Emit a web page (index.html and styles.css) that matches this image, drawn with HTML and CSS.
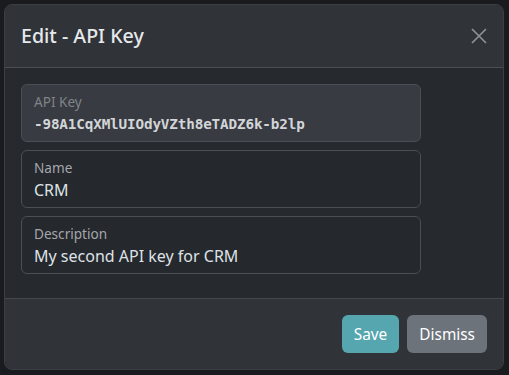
FILE: index.html
```html
<!DOCTYPE html>
<html lang="en">
<head>
    <meta charset="UTF-8">
    <meta name="viewport" content="width=device-width, initial-scale=1.0">
    <title>Edit - API Key</title>
    <link rel="stylesheet" href="styles.css">
</head>
<body>
    <div class="modal">
        <div class="modal-header">
            <h1 class="modal-title">Edit - API Key</h1>
            <button class="btn-close" aria-label="Close">
                <svg width="16" height="16" viewBox="0 0 16 16">
                    <path d="M1 1L15 15M15 1L1 15" stroke="currentColor" stroke-width="1.7" fill="none"/>
                </svg>
            </button>
        </div>

        <div class="modal-body">
            <div class="field field-disabled">
                <label for="apiKey">API Key</label>
                <input type="text" id="apiKey" class="mono" value="-98A1CqXMlUIOdyVZth8eTADZ6k-b2lp" disabled>
            </div>
            <div class="field">
                <label for="keyName">Name</label>
                <input type="text" id="keyName" value="CRM">
            </div>
            <div class="field">
                <label for="keyDesc">Description</label>
                <input type="text" id="keyDesc" value="My second API key for CRM">
            </div>
        </div>

        <div class="modal-footer">
            <button class="btn btn-save">Save</button>
            <button class="btn btn-dismiss">Dismiss</button>
        </div>
    </div>
</body>
</html>
```

FILE: styles.css
```css
body {
    margin: 0;
    padding: 4px;
    background-color: #1a1b1e;
    font-family: 'Noto Sans', 'Open Sans', sans-serif;
    color: #dee2e6;
}
.modal {
    width: 500px;
    box-sizing: border-box;
    background-color: #26292e;
    border: 1px solid #3b3e43;
    border-radius: 8px;
    overflow: hidden;
}
.modal-header {
    display: flex;
    align-items: center;
    justify-content: space-between;
    padding: 16px;
    background-color: #303338;
    border-bottom: 1px solid #4a4d52;
}
.modal-title {
    margin: 0;
    font-size: 19.6px;
    font-weight: 500;
    line-height: 30px;
    color: #e6e9ec;
}
.btn-close {
    display: flex;
    padding: 0;
    border: none;
    background: none;
    color: #8e9194;
    cursor: pointer;
}
.modal-body {
    padding: 16px;
}
.field {
    width: 400px;
    box-sizing: border-box;
    height: 58px;
    margin-bottom: 8px;
    padding: 7px 12px 0;
    border: 1px solid #4b4f55;
    border-radius: 6px;
    background-color: #25282d;
}
.field label {
    display: block;
    font-size: 13.6px;
    line-height: 20px;
    color: #a3a7ab;
}
.field input {
    display: block;
    width: 100%;
    padding: 0;
    border: none;
    background: transparent;
    font-family: inherit;
    font-size: 16px;
    line-height: 24px;
    color: #dee2e6;
    outline: none;
}
.field-disabled {
    background-color: #383b41;
}
.field-disabled label {
    color: #7f8388;
}
.field input.mono {
    font-family: 'DejaVu Sans Mono', monospace;
    font-size: 14.3px;
    font-weight: bold;
    letter-spacing: -0.15px;
    color: #d3d6d9;
}
.modal-footer {
    display: flex;
    justify-content: flex-end;
    gap: 8px;
    padding: 16px;
    background-color: #303338;
    border-top: 1px solid #44474c;
}
.btn {
    height: 38px;
    padding: 0 12px;
    border: none;
    border-radius: 6px;
    font-family: inherit;
    font-size: 15.4px;
    color: #ffffff;
    cursor: pointer;
}
.btn-save {
    background-color: #56a6b0;
}
.btn-dismiss {
    background-color: #6c737b;
}
```
